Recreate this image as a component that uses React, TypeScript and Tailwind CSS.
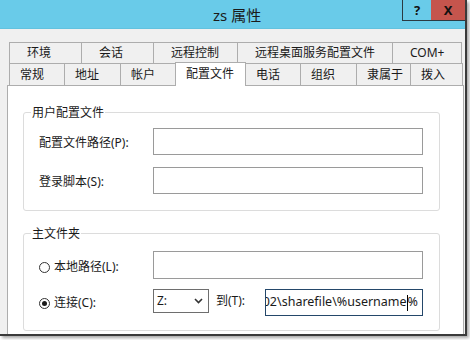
import React from "react";

const row1 = [
  { t: "环境", w: "w-[72px]" },
  { t: "会话", w: "w-[72px]" },
  { t: "远程控制", w: "w-[84px]" },
  { t: "远程桌面服务配置文件", w: "w-[155px]" },
  { t: "COM+", w: "w-[70px]" },
];

const row2 = [
  { t: "常规", w: "w-[55px]" },
  { t: "地址", w: "w-[56px]" },
  { t: "帐户", w: "w-[55px]" },
  { t: "配置文件", w: "w-[71px]", sel: true },
  { t: "电话", w: "w-[54px]" },
  { t: "组织", w: "w-[56px]" },
  { t: "隶属于", w: "w-[54px]" },
  { t: "拨入", w: "w-[53px]" },
];

function Radio({ on }: { on?: boolean }) {
  return (
    <span className="flex h-[11px] w-[11px] items-center justify-center rounded-full border border-[#333] bg-white">
      {on && <span className="h-[5px] w-[5px] rounded-full bg-[#1a1a1a]" />}
    </span>
  );
}

export default function App() {
  return (
    <div className="h-[340px] w-[470px] overflow-hidden bg-white font-['Noto_Sans','Noto_Sans_CJK_SC',sans-serif] text-[12px] text-[#1a1a1a]">
      <div className="flex h-[336px] w-[467px] flex-col border-b-2 border-r-2 border-[#3a3a3a] shadow-[2px_2px_3px_rgba(0,0,0,0.35)]">
        {/* title bar */}
        <div className="flex h-[29px] shrink-0 border-b border-[#62c2df] bg-[#69cbe9]">
          <div className="ml-[213px] mt-[5px] text-[15px] leading-[20px] text-[#1a1a1a]">zs 属性</div>
          <div className="ml-auto flex h-[21px]">
            <div className="flex w-[29px] items-center justify-center border-b border-l border-[#2b3a42] bg-[#69cbe9] text-[13px] font-bold leading-none text-[#111]">
              ?
            </div>
            <div className="flex w-[34px] items-center justify-center border-b border-[#2b3a42] bg-[#c5554d] text-[13px] font-bold leading-none text-[#111]">
              X
            </div>
          </div>
        </div>

        {/* body */}
        <div className="flex flex-1 flex-col bg-[#f0f0f0] pl-[7px] pt-[13px]">
          <div className="ml-[2px] flex flex-col">
            <div className="flex h-[21px]">
              {row1.map((t, i) => (
                <div
                  key={t.t}
                  className={`${t.w} flex items-center border-l border-t border-[#adadad] bg-[#f0f0f0] pl-[17px] leading-none ${
                    i === row1.length - 1 ? "border-r" : ""
                  }`}
                >
                  {t.t}
                </div>
              ))}
            </div>
            <div className="flex h-[22px]">
              {row2.map((t, i) =>
                t.sel ? (
                  <div
                    key={t.t}
                    className={`${t.w} relative z-10 -mt-[1px] flex h-[24px] items-center border-l border-r border-t border-[#adadad] bg-white pb-[1px] pl-[10px] leading-none`}
                  >
                    {t.t}
                  </div>
                ) : (
                  <div
                    key={t.t}
                    className={`${t.w} flex items-center border-l border-t border-[#adadad] bg-[#f0f0f0] pl-[10px] leading-none ${
                      i === row2.length - 1 ? "border-r" : ""
                    } ${i === 4 ? "border-l-0 pl-[8px]" : ""}`}
                  >
                    {t.t}
                  </div>
                )
              )}
            </div>
          </div>

          {/* panel */}
          <div className="flex w-[457px] flex-1 flex-col border-l border-r border-t border-[#adadad] bg-white pl-[15px] pt-[26px]">
            {/* group 1 */}
            <div className="flex w-[417px] flex-col rounded-[3px] border border-[#dcdcdc] pb-[16px]">
              <div className="-mt-[8px] ml-[7px] h-[16px] w-fit bg-white px-[1px] leading-[16px]">用户配置文件</div>
              <div className="mt-[7px] flex items-center pl-[15px]">
                <div className="w-[114px] pt-[2px]">配置文件路径(P):</div>
                <div className="h-[27px] w-[270px] border border-[#9a9a9a] bg-white" />
              </div>
              <div className="mt-[12px] flex items-center pl-[15px]">
                <div className="w-[114px] pt-[2px]">登录脚本(S):</div>
                <div className="h-[27px] w-[270px] border border-[#9a9a9a] bg-white" />
              </div>
            </div>

            {/* group 2 */}
            <div className="mt-[22px] flex w-[417px] flex-col rounded-[3px] border border-[#dcdcdc] pb-[14px]">
              <div className="-mt-[8px] ml-[7px] h-[16px] w-fit bg-white px-[1px] leading-[16px]">主文件夹</div>
              <div className="mt-[9px] flex items-center pl-[15px]">
                <div className="flex w-[114px] items-center gap-[4px] pt-[4px]">
                  <Radio />
                  <span>本地路径(L):</span>
                </div>
                <div className="h-[28px] w-[270px] border border-[#9a9a9a] bg-white" />
              </div>
              <div className="mt-[10px] flex items-start pl-[15px]">
                <div className="flex h-[27px] w-[114px] items-center gap-[4px] pt-[1px]">
                  <Radio on />
                  <span>连接(C):</span>
                </div>
                <div className="flex h-[24px] w-[56px] items-center border border-[#6e6e6e] bg-white pl-[3px] pr-[5px]">
                  <span>Z:</span>
                  <svg className="ml-auto" width="9" height="6" viewBox="0 0 9 6">
                    <path d="M1 1 L4.5 4.5 L8 1" fill="none" stroke="#333" strokeWidth="1.6" />
                  </svg>
                </div>
                <div className="ml-[7px] flex h-[24px] w-[49px] items-center">到(T):</div>
                <div className="flex h-[27px] w-[158px] items-center justify-end overflow-hidden whitespace-nowrap border border-[#24476a] bg-white pr-[4px] text-[12.5px]">
                  <span>02\sharefile\%username</span>
                  <span className="h-[16px] w-px shrink-0 bg-black" />
                  <span>%</span>
                </div>
              </div>
            </div>
          </div>
        </div>
      </div>
    </div>
  );
}
